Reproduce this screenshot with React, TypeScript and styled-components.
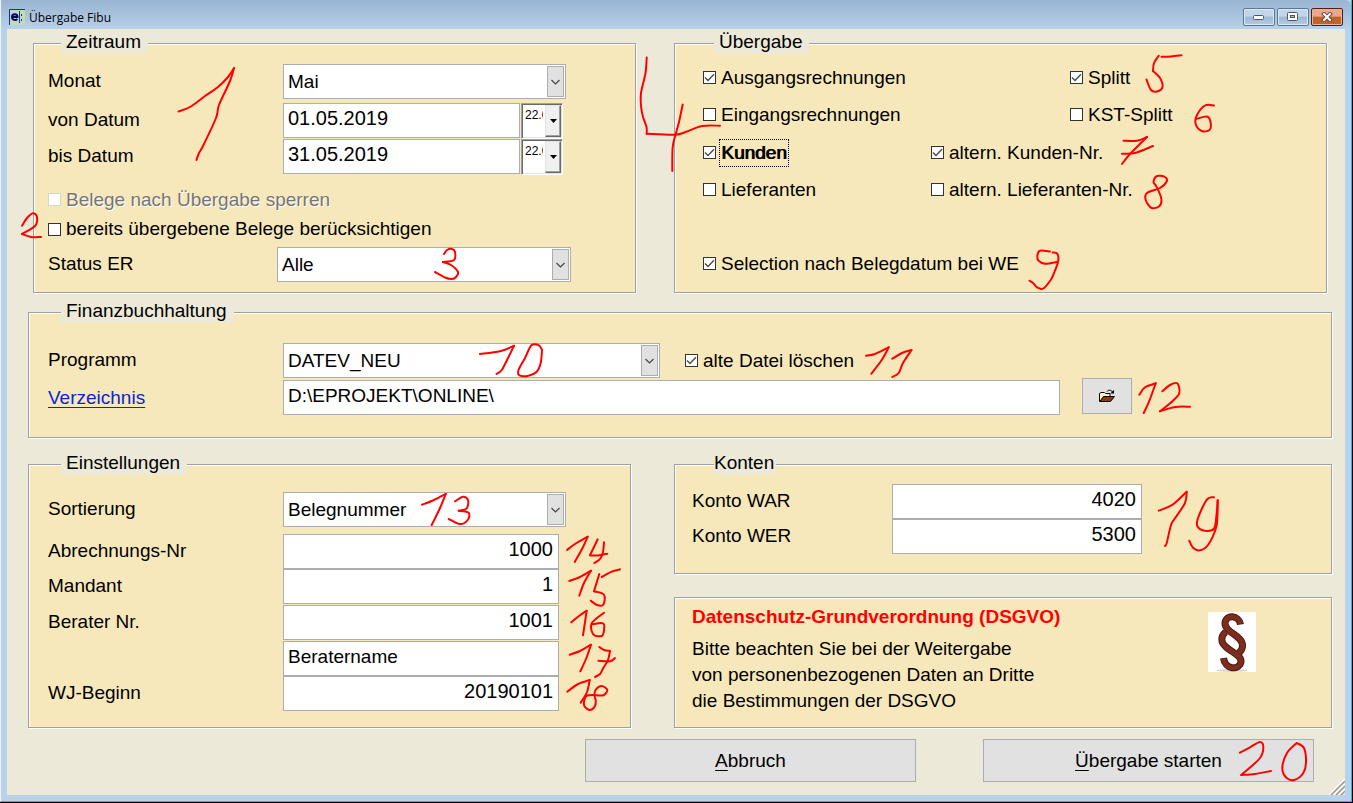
import React from "react";
import styled, { createGlobalStyle, css } from "styled-components";

const GlobalStyle = createGlobalStyle`
  *, *::before, *::after { box-sizing: border-box; }
  body {
    margin: 0;
    background: #000;
    color: #000;
    font-family: "Liberation Sans", Arial, sans-serif;
    font-size: 19px;
    line-height: 24px;
  }
  button, input, select { font: inherit; color: inherit; margin: 0; }
`;

/* ---------- window chrome ---------- */

const Desktop = styled.div`
  min-height: 100vh;
  padding: 0 1px 1px 0;
  display: flex;
  background: #000;
`;

const Window = styled.div`
  flex: 1;
  min-width: 1180px;
  display: flex;
  flex-direction: column;
  padding: 0 6px 6px;
  background: #b9d1ea;
  border: solid #2cb5e0;
  border-width: 0 1px 1px 0;
  border-left: 1px solid #eef3f8;
`;

const TitleBar = styled.header`
  height: 29px;
  margin: 0 -6px;
  padding: 0 8px;
  display: flex;
  align-items: center;
  gap: 4px;
  background: linear-gradient(#99b4d1, #b9d1ea);
  border-top-right-radius: 6px;
`;

const WindowTitle = styled.h1`
  flex: 1;
  margin: 0;
  padding-top: 7px;
  font: 12px/16px "Open Sans", "Noto Sans", sans-serif;
`;

const AppIcon = styled.svg`
  width: 16px;
  height: 16px;
  margin-top: 4px;
`;

const Captions = styled.div`
  display: flex;
  gap: 2px;
  margin-top: 5px;
`;

const CaptionButton = styled.button<{ $close?: boolean }>`
  width: 32px;
  height: 18px;
  padding: 0;
  display: flex;
  align-items: center;
  justify-content: center;
  border: 1px solid ${(p) => (p.$close ? "#5a1a14" : "#5a7896")};
  border-radius: 2px;
  box-shadow: inset 0 0 0 1px ${(p) => (p.$close ? "#e9b49c" : "#dbe8f5")};
  background: ${(p) =>
    p.$close
      ? "linear-gradient(#e9a88c 0 45%, #c0642a 50% 100%)"
      : "linear-gradient(#c2d6ea 0 45%, #9cb8d4 50%, #b4cce4)"};
`;

const Client = styled.main`
  flex: 1;
  position: relative;
  display: flex;
  flex-direction: column;
  padding: 14px 13px 13px 21px;
  background: #ece9d8;
`;

const Grip = styled.svg`
  position: absolute;
  right: 0;
  bottom: 0;
  width: 16px;
  height: 16px;
`;

/* ---------- panels ---------- */

const TopRow = styled.div`
  display: grid;
  grid-template-columns: minmax(0, 603fr) minmax(0, 653fr);
  gap: 38px;
  margin: 0 5px 19px;
`;

const BottomRow = styled.div`
  display: grid;
  grid-template-columns: minmax(0, 603fr) minmax(0, 658fr);
  gap: 43px;
  margin: 26px 0 11px;
`;

const Stack = styled.div`
  display: flex;
  flex-direction: column;
  gap: 23px;
`;

const Panel = styled.section<{ $fill?: boolean; $pad: string }>`
  position: relative;
  flex: ${(p) => (p.$fill ? "1" : "none")};
  padding: ${(p) => p.$pad};
  background: #f7e8bc;
  border: 1px solid #a0a0a0;
  box-shadow: 1px 1px 0 #fff, inset 1px 1px 0 #fff;
`;

const Legend = styled.h2<{ $left: number; $tight?: boolean }>`
  position: absolute;
  left: ${(p) => p.$left}px;
  top: -14px;
  margin: 0;
  padding: ${(p) => (p.$tight ? "0 2px 0 0" : "0 7px 0 5px")};
  background: #ece9d8;
  font-size: 19px;
  line-height: 24px;
  font-weight: 400;
`;

const Row = styled.div<{ $gap?: number }>`
  display: flex;
  align-items: center;
  min-height: 35px;
  margin-top: ${(p) => p.$gap ?? 0}px;
`;

const Caption = styled.label<{ $width: number }>`
  width: ${(p) => p.$width}px;
  padding-bottom: 2px;
  flex: none;
`;

const PathLink = styled.a`
  width: 235px;
  padding-top: 2px;
  flex: none;
  color: #0b24d8;
  text-underline-offset: 3px;
`;

/* ---------- controls ---------- */

const TextField = styled.input<{ $width?: number; $right?: boolean; $digits?: boolean }>`
  ${(p) =>
    p.$width
      ? css`
          width: ${p.$width}px;
          flex: none;
        `
      : css`
          flex: 1;
          min-width: 0;
          align-self: flex-end;
        `}
  height: 35px;
  padding: 0 5px 4px 4px;
  border: 1px solid #abadb3;
  border-radius: 0;
  background: #fff;
  outline: none;
  text-align: ${(p) => (p.$right ? "right" : "left")};
  font-size: ${(p) => (p.$digits ? 20 : 19)}px;
`;

const SelectBox = styled.div<{ $width: number }>`
  position: relative;
  width: ${(p) => p.$width}px;
  flex: none;
`;

const NativeSelect = styled.select`
  display: block;
  width: 100%;
  height: 35px;
  padding: 0 24px 0 4px;
  appearance: none;
  border: 1px solid #abadb3;
  border-radius: 0;
  background: #fff;
  outline: none;
`;

const SelectArrow = styled.span`
  position: absolute;
  top: 2px;
  right: 2px;
  bottom: 2px;
  width: 17px;
  display: flex;
  align-items: center;
  justify-content: center;
  border: 1px solid #adadad;
  background: #e1e1e1;
  pointer-events: none;
`;

const DatePick = styled.div`
  width: 42px;
  height: 36px;
  margin: 0 0 -1px 1px;
  display: flex;
  flex: none;
  background: #fff;
  border: 1px solid #fff;
  border-top-color: #a0a0a0;
  border-left-color: #a0a0a0;
  box-shadow: inset 1px 1px 0 #696969, inset -1px -1px 0 #e3e3e3;
`;

const DateText = styled.input`
  width: 23px;
  padding: 2px 2px 14px 3px;
  border: 0;
  background: transparent;
  outline: none;
  font-size: 12px;
`;

const DateButton = styled.button`
  width: 16px;
  margin: 1px 1px 1px 0;
  padding: 0;
  display: flex;
  align-items: center;
  justify-content: center;
  background: #f0f0f0;
  border: 1px solid #696969;
  border-left-color: #e3e3e3;
  border-top-color: #e3e3e3;
  box-shadow: inset -1px -1px 0 #a0a0a0;
`;

const CheckLabel = styled.label<{ $disabled?: boolean; $height?: number; $wide?: boolean }>`
  display: flex;
  align-items: center;
  gap: 5px;
  height: ${(p) => p.$height ?? 37}px;
  white-space: nowrap;
  ${(p) =>
    p.$disabled &&
    css`
      color: #757575;
      text-shadow: 1px 1px 0 #fff;
    `}
  ${(p) =>
    p.$wide &&
    css`
      grid-column: 1 / -1;
    `}
`;

const Tick = styled.span`
  position: relative;
  width: 13px;
  height: 13px;
  flex: none;
`;

const TickInput = styled.input`
  display: block;
  width: 13px;
  height: 13px;
  appearance: none;
  background: #fff;
  border: 1px solid #333;
  &:disabled { border-color: #ccdcc0; }
  & + svg { display: none; }
  &:checked + svg { display: block; }
`;

const TickMark = styled.svg`
  position: absolute;
  inset: 0;
  width: 13px;
  height: 13px;
  pointer-events: none;
`;

const Focused = styled.span`
  margin-left: -2px;
  padding: 1px 1px;
  border: 1px dotted #000;
  text-shadow: 1px 0 0 #000;
`;

const CheckGrid = styled.div`
  display: grid;
  grid-template-columns: 228px 139px 1fr;
  grid-template-rows: 37px 38px 37px 37px 37px 37px;
`;

const ButtonSlot = styled.div`
  position: relative;
  flex: none;
`;

const PushButton = styled.button`
  display: flex;
  align-items: center;
  justify-content: center;
  width: 331px;
  height: 43px;
  padding: 0;
  background: #e1e1e1;
  border: 1px solid #adadad;
  & > u { text-underline-offset: 3px; }
`;

const BrowseButton = styled(PushButton)`
  width: 50px;
  height: 36px;
`;

const PathRow = styled(Row)`
  min-height: 37px;
  align-items: center;
`;

const BrowseSlot = styled(ButtonSlot)`
  margin: 0 199px 0 22px;
  align-self: flex-start;
`;

const Spacer = styled.span`
  width: 25px;
`;

const Actions = styled.footer`
  display: flex;
  justify-content: flex-end;
  gap: 67px;
  padding-right: 18px;
`;

const Notice = styled.div`
  display: flex;
  justify-content: space-between;
`;

const NoticeTitle = styled.h2`
  margin: 0 0 7px;
  color: #f00;
  font-size: 19px;
  line-height: 24px;
`;

const NoticeText = styled.p`
  margin: 0;
  line-height: 26px;
`;

const Paragraph = styled.svg`
  width: 48px;
  height: 60px;
  margin: 7px 75px 0 0;
  background: #fff;
`;

/* ---------- red pen notes ---------- */

const InkSvg = styled.svg`
  position: absolute;
  left: 0;
  top: 0;
  width: 1px;
  height: 1px;
  overflow: visible;
  pointer-events: none;
  fill: none;
  stroke: #f00;
  stroke-width: 2;
  stroke-linecap: round;
  stroke-linejoin: round;
`;

type Point = [number, number];

/* Turns a list of pen positions into a smooth stroke through all of them. */
function smooth(stroke: string): string {
  const p = stroke.split(" ").map((s) => s.split(",").map(Number) as Point);
  let d = `M${p[0]}`;
  for (let i = 0; i < p.length - 1; i++) {
    const a = p[i - 1] ?? p[i];
    const b = p[i];
    const c = p[i + 1];
    const e = p[i + 2] ?? c;
    d += `C${b[0] + (c[0] - a[0]) / 6},${b[1] + (c[1] - a[1]) / 6} ${c[0] - (e[0] - b[0]) / 6},${c[1] - (e[1] - b[1]) / 6} ${c}`;
  }
  return d;
}

const Ink = ({ origin, strokes, note }: { origin: Point; strokes: string[]; note: string }) => (
  <InkSvg viewBox={`${origin[0]} ${origin[1]} 1 1`} role="img" aria-label={note}>
    {strokes.map((s) => (
      <path key={s} d={smooth(s)} />
    ))}
  </InkSvg>
);

const periodInk = [
  "178.5,111.5 190,107 205,96 218,87 228,77 234,68",
  "234,68 230,81 219,105 216,118 203,146 199,153 196.5,160",
  "22,225.7 27,218 33,213.3 37,217 35,226 22,234",
  "22,234 31,237 41,237",
  "444,254 447,250 452,249 455,252 454,260 443,262",
  "443,262 451,265 458,272 456,277 452,279 445,277.5 435,272",
];

const transferInk = [
  "646.7,57.5 645.5,73 641,93 641,106 643,117 646.5,127 646.7,133.7",
  "646.7,133.7 675,134.7 687,131.5 702,126 720,125.7",
  "682.7,104.5 679,122 676,133 672.7,147 672.3,171",
  "1158.7,55.7 1154,63 1153,71",
  "1153,71 1160,78 1162.5,87 1157,91.5 1151,90 1146.5,79.5",
  "1161.5,56.7 1171,56.5 1181.5,55.3",
  "1214,105.5 1205,105.5 1197,115 1195.7,124 1201.7,131 1209.5,130 1210.7,123 1207.5,116.7 1197,118.7",
  "1123.5,140.7 1137,140.7 1147,137",
  "1147,137 1130,154 1122,164",
  "1122,153.7 1135,153 1153,146",
  "1155.5,185 1153.5,181.7 1157,176 1165,177 1166.7,181.5 1160,188 1147,193 1145.7,200 1151.7,208 1159.5,206 1161.5,200 1159.5,193 1155.5,185",
  "1056.7,262 1045,263.7 1038.5,260.7 1037.5,255 1040,250.7 1050,251.5",
  "1052.7,252.5 1057.5,254 1058,262 1054,273 1050.7,280 1043,288.7 1037,287.3 1033,283 1029.5,280.7",
];

const accountingInk = [
  "480,354 500,351.3 514,345.7",
  "514,345.7 508,358 501.7,370 496.5,374",
  "542,350 539,345.3 531.5,345.3 525,358 518.5,370 519.5,375.3 528.5,375.7 536.7,371.7 540.7,363 542,350",
  "866,355.7 875,354 888.7,347.3",
  "888.7,347.3 881.7,360 871.3,373.7",
  "892.3,358.7 902,353 911.5,350",
  "911.5,350 903,363 898.7,373 892.3,377",
];

const folderInk = [
  "1139.3,394.7 1145,387.3 1155.7,383.3",
  "1155.7,383.3 1149,401.7 1143.7,413",
  "1162.3,391.3 1170,385 1177.3,383.3 1179.3,393 1173,400.7 1160,411.3",
  "1160,411.3 1175,407 1190,406.7",
];

const settingsInk = [
  "422,504.7 434,500 445.7,494",
  "445.7,494 440,508 431.7,525",
  "455,501.3 463,496.7 468,500 466.7,508.3 458.7,510.7",
  "458.7,510.7 468.7,512.7 467.7,520 460,524 448.7,519",
  "567,550 575,544 587.7,536.7",
  "587.7,536.7 582,549 574.7,562",
  "597.7,539.3 590,555.3",
  "590,555.3 598,555.5 607.3,553.7",
  "604,542.3 603,552 600,559 594.3,563",
  "569.3,581 580,577 591,570.7",
  "591,570.7 584,583 579.3,595.7",
  "599.3,574 594,591.3",
  "594,591.3 604,594.7 603.3,604.7 597,605 590.7,600.7",
  "601.7,577 611.7,571.7 620,569.3",
  "571.3,622.3 579,616 586.7,610.7",
  "586.7,610.7 585,622 583,635.3",
  "604,612.7 591.7,623.3 593.3,634.3 601.7,636 604,630 603,623.3 592,624.3",
  "569.7,654.7 580,651 591,644.7",
  "591,644.7 586,659 580.3,671.3",
  "599.3,647 604,650 610,651",
  "610,651 608,660 603.3,668 600,674 595,677",
  "598.3,660.7 610,661.3 615,658",
  "567.3,691.7 578,684 589.7,680",
  "589.7,680 587,692 580.7,702.7",
  "595,695 587,695.5 584.3,700 584.3,706 590,710 595,706 595.7,700 594.3,695 596,689.3 601.7,686 607.3,690 603.3,695.3 595,695",
];

const accountsInk = [
  "1158.7,510.7 1173,504.3 1186.7,491.7",
  "1186.7,491.7 1185,503 1175,518.3 1171,525 1166.7,543 1165,546",
  "1214,497.3 1207,499.3 1198,518 1197.7,526.7 1205,530.7 1214,528.7 1216.5,515 1217.7,500.3",
  "1217.7,500.3 1217.5,514 1216,528 1208,545 1200,550.3 1193,547.7 1189.3,540.7",
];

const startInk = [
  "1240,752.7 1250,747.3 1260,742 1263.3,746.7 1260,758 1241.3,775",
  "1241.3,775 1255,774 1271,771",
  "1296.7,743 1287,753 1282.3,768 1286.7,778 1295,779.7 1303.3,773 1306,763 1304,748 1296.7,743",
];

/* ---------- small composites ---------- */

const Select = ({ id, width, value }: { id: string; width: number; value: string }) => (
  <SelectBox $width={width}>
    <NativeSelect id={id} defaultValue={value}>
      <option>{value}</option>
    </NativeSelect>
    <SelectArrow>
      <svg width="9" height="6" viewBox="0 0 9 6" fill="none" stroke="#444" strokeWidth="1.2">
        <path d="M.5 1 4.5 5 8.5 1" />
      </svg>
    </SelectArrow>
  </SelectBox>
);

type CheckProps = {
  children: React.ReactNode;
  checked?: boolean;
  disabled?: boolean;
  height?: number;
  wide?: boolean;
};

const Check = ({ children, checked, disabled, height, wide }: CheckProps) => (
  <CheckLabel $disabled={disabled} $height={height} $wide={wide}>
    <Tick>
      <TickInput type="checkbox" defaultChecked={checked} disabled={disabled} />
      <TickMark viewBox="0 0 13 13" fill="none" stroke="#4a4a4a" strokeWidth="1.4">
        <path d="M2 6.5 5 9.5 11 3.2" />
      </TickMark>
    </Tick>
    {children}
  </CheckLabel>
);

const DateRow = ({ id, label, value, gap }: { id: string; label: string; value: string; gap: number }) => (
  <Row $gap={gap}>
    <Caption htmlFor={id} $width={235}>{label}</Caption>
    <TextField id={id} $width={237} $digits defaultValue={value} />
    <DatePick>
      <DateText aria-label={`${label} Kalender`} defaultValue="22.0" />
      <DateButton type="button" aria-label="Kalender öffnen">
        <svg width="7" height="4" viewBox="0 0 7 4">
          <path d="M0 0H7L3.5 4Z" />
        </svg>
      </DateButton>
    </DatePick>
  </Row>
);

const GridGap = styled.span<{ $span: number }>`
  grid-column: span ${(p) => p.$span};
`;

const GridLine = styled.span`
  grid-column: 1 / -1;
`;

export default function App() {
  return (
    <Desktop>
      <GlobalStyle />
      <Window>
        <TitleBar>
          <AppIcon viewBox="0 0 16 16" aria-hidden="true">
            <rect width="16" height="16" fill="#c3d8bd" />
            <path d="M.5 16V.5H16" stroke="#0a3aa0" fill="none" />
            <path d="M3 8H8.5C8.5 4.300 3 4.300 3 8 3 11.500 7 11.500 8.300 10" stroke="#0a0a5a" strokeWidth="2" fill="none" />
            <path d="M10.500 2V14" stroke="#0a3aa0" />
            <path d="M12 5h1v2h-1zM12 10h1v2h-1z" fill="#123a80" />
          </AppIcon>
          <WindowTitle>Übergabe Fibu</WindowTitle>
          <Captions>
            <CaptionButton type="button" aria-label="Minimieren">
              <svg width="12" height="6" viewBox="0 0 12 6">
                <rect x=".5" y="1.500" width="10" height="4" rx="1" fill="#fff" stroke="#50565e" />
              </svg>
            </CaptionButton>
            <CaptionButton type="button" aria-label="Maximieren">
              <svg width="12" height="10" viewBox="0 0 12 10">
                <rect x=".5" y=".5" width="10" height="8" rx="1" fill="#fff" stroke="#50565e" />
                <rect x="3.500" y="3.500" width="4" height="2" fill="#a9c2dc" stroke="#50565e" />
              </svg>
            </CaptionButton>
            <CaptionButton type="button" $close aria-label="Schließen">
              <svg width="12" height="10" viewBox="0 0 12 10" fill="none" strokeLinecap="square">
                <path d="M3 2 9 8M9 2 3 8" stroke="#5c4a4a" strokeWidth="4" />
                <path d="M3 2 9 8M9 2 3 8" stroke="#fff" strokeWidth="2" />
              </svg>
            </CaptionButton>
          </Captions>
        </TitleBar>

        <Client>
          <TopRow>
            <Panel $pad="20px 14px 10px">
              <Legend $left={27}>Zeitraum</Legend>
              <Row>
                <Caption htmlFor="monat" $width={235}>Monat</Caption>
                <Select id="monat" width={283} value="Mai" />
              </Row>
              <DateRow id="von" label="von Datum" value="01.05.2019" gap={4} />
              <DateRow id="bis" label="bis Datum" value="31.05.2019" gap={1} />
              <Row $gap={8}>
                <Check disabled height={30}>Belege nach Übergabe sperren</Check>
              </Row>
              <Check height={24}>bereits übergebene Belege berücksichtigen</Check>
              <Row $gap={6}>
                <Caption htmlFor="status" $width={229}>Status ER</Caption>
                <Select id="status" width={294} value="Alle" />
              </Row>
              <Ink note="1, 2, 3" origin={[34, 44]} strokes={periodInk} />
            </Panel>

            <Panel $pad="15px 14px 0 28px">
              <Legend $left={39}>Übergabe</Legend>
              <CheckGrid>
                <Check checked>Ausgangsrechnungen</Check>
                <GridGap $span={1} />
                <Check checked>Splitt</Check>
                <Check>Eingangsrechnungen</Check>
                <GridGap $span={1} />
                <Check>KST-Splitt</Check>
                <Check checked>
                  <Focused>Kunden</Focused>
                </Check>
                <Check checked>altern. Kunden-Nr.</Check>
                <GridGap $span={1} />
                <Check>Lieferanten</Check>
                <Check>altern. Lieferanten-Nr.</Check>
                <GridGap $span={1} />
                <GridLine />
                <Check checked wide>Selection nach Belegdatum bei WE</Check>
              </CheckGrid>
              <Ink note="4, 5, 6, 7, 8, 9" origin={[675, 44]} strokes={transferInk} />
            </Panel>
          </TopRow>

          <Panel $pad="30px 0 22px 19px">
            <Legend $left={32}>Finanzbuchhaltung</Legend>
            <Row>
              <Caption htmlFor="programm" $width={235}>Programm</Caption>
              <Select id="programm" width={377} value="DATEV_NEU" />
              <Spacer />
              <Check checked height={35}>alte Datei löschen</Check>
            </Row>
            <PathRow>
              <PathLink href="#pfad">Verzeichnis</PathLink>
              <TextField id="pfad" aria-label="Verzeichnis" defaultValue="D:\EPROJEKT\ONLINE\" />
              <BrowseSlot>
                <BrowseButton type="button" aria-label="Verzeichnis wählen">
                  <svg width="17" height="14" viewBox="0 0 17 14" fill="none">
                    <path d="M.5 12.500V4.500L2 3.500H5.500L6.500 4.500H11V7.500" fill="#fdf3c0" stroke="#000" />
                    <path d="M4.500 7.500H15.500L11.500 12.500H.8Z" fill="#8a3a0c" stroke="#000" />
                    <path d="M8 2.500C9 .8 12 .5 13.500 3" stroke="#000" />
                    <path d="M15 .8V4.500H11.300Z" fill="#000" />
                  </svg>
                </BrowseButton>
                <Ink note="12" origin={[1082, 378]} strokes={folderInk} />
              </BrowseSlot>
            </PathRow>
            <Ink note="10, 11" origin={[29, 313]} strokes={accountingInk} />
          </Panel>

          <BottomRow>
            <Panel $pad="27px 0 16px 19px">
              <Legend $left={32}>Einstellungen</Legend>
              <Row>
                <Caption htmlFor="sort" $width={235}>Sortierung</Caption>
                <Select id="sort" width={283} value="Belegnummer" />
              </Row>
              <Row $gap={7}>
                <Caption htmlFor="abr" $width={235}>Abrechnungs-Nr</Caption>
                <TextField id="abr" $width={276} $right $digits defaultValue="1000" />
              </Row>
              <Row>
                <Caption htmlFor="mandant" $width={235}>Mandant</Caption>
                <TextField id="mandant" $width={276} $right $digits defaultValue="1" />
              </Row>
              <Row $gap={1}>
                <Caption htmlFor="berater" $width={235}>Berater Nr.</Caption>
                <TextField id="berater" $width={276} $right $digits defaultValue="1001" />
              </Row>
              <Row $gap={1}>
                <Caption as="span" $width={235} />
                <TextField aria-label="Beratername" $width={276} defaultValue="Beratername" />
              </Row>
              <Row>
                <Caption htmlFor="wj" $width={235}>WJ-Beginn</Caption>
                <TextField id="wj" $width={276} $right $digits defaultValue="20190101" />
              </Row>
              <Ink note="13, 14, 15, 16, 17, 18" origin={[29, 465]} strokes={settingsInk} />
            </Panel>

            <Stack>
              <Panel $pad="19px 0 19px 17px">
                <Legend $left={39} $tight>Konten</Legend>
                <Row>
                  <Caption htmlFor="war" $width={200}>Konto WAR</Caption>
                  <TextField id="war" $width={250} $right $digits defaultValue="4020" />
                </Row>
                <Row>
                  <Caption htmlFor="wer" $width={200}>Konto WER</Caption>
                  <TextField id="wer" $width={250} $right $digits defaultValue="5300" />
                </Row>
                <Ink note="19" origin={[675, 465]} strokes={accountsInk} />
              </Panel>

              <Panel $fill $pad="7px 0 0 17px">
                <Notice>
                  <div>
                    <NoticeTitle>Datenschutz-Grundverordnung (DSGVO)</NoticeTitle>
                    <NoticeText>
                      Bitte beachten Sie bei der Weitergabe
                      <br />
                      von personenbezogenen Daten an Dritte
                      <br />
                      die Bestimmungen der DSGVO
                    </NoticeText>
                  </div>
                  <Paragraph viewBox="0 0 48 60" fill="none" role="img" aria-label="Paragraphenzeichen">
                    <ellipse cx="24" cy="58.500" rx="16" ry="1.500" fill="#d8d4d2" />
                    <g stroke="#4a1a12" strokeWidth="7">
                      <path d="M32.500 12.500C31 3 18 2 17 11 16.500 21 35 23 34.500 34 34.500 37 33 39 31 41" />
                      <path d="M17.500 20C12 25 13 31 18 35 25 41 34 44 33 50 31 58.500 17 58 15.500 46" />
                    </g>
                    <g stroke="#7c2d1d" strokeWidth="5">
                      <path d="M32.500 12C31 3 18 2 17 11 16.500 21 35 23 34.500 34 34.500 37 33 39 31 41" />
                      <path d="M17.500 20C12 25 13 31 18 35 25 41 34 44 33 50 31 58.500 17 58 15.500 46.500" />
                    </g>
                  </Paragraph>
                </Notice>
              </Panel>
            </Stack>
          </BottomRow>

          <Actions>
            <PushButton type="button">
              <u>A</u>bbruch
            </PushButton>
            <ButtonSlot>
              <PushButton type="button">
                <u>Ü</u>bergabe starten
              </PushButton>
              <Ink note="20" origin={[983, 739]} strokes={startInk} />
            </ButtonSlot>
          </Actions>

          <Grip viewBox="0 0 16 16" fill="none" aria-hidden="true">
            <path d="M0 16 16 0M5 16 16 5M10 16 16 10" stroke="#fff" strokeWidth="1.500" />
            <path d="M2 16 16 2M7 16 16 7M12 16 16 12" stroke="#9a9890" strokeWidth="1.500" />
          </Grip>
        </Client>
      </Window>
    </Desktop>
  );
}
